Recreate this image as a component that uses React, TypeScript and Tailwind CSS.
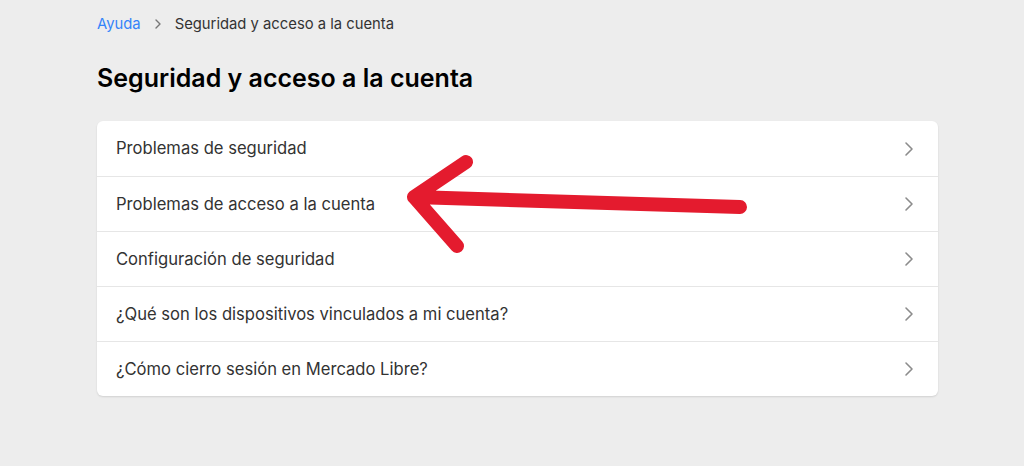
const items = [
  "Problemas de seguridad",
  "Problemas de acceso a la cuenta",
  "Configuración de seguridad",
  "¿Qué son los dispositivos vinculados a mi cuenta?",
  "¿Cómo cierro sesión en Mercado Libre?",
];

function Chevron() {
  return (
    <svg width="10" height="16" viewBox="0 0 10 16" fill="none" className="shrink-0">
      <path d="M2 2l6 6-6 6" stroke="#8c8c8c" strokeWidth="1.6" strokeLinecap="round" strokeLinejoin="round" />
    </svg>
  );
}

export default function App() {
  return (
    <main
      className="relative min-h-[466px] bg-[#ededed] text-[#333]"
      style={{ fontFamily: "Inter, 'Noto Sans', sans-serif" }}
    >
      <div className="ml-[97px] w-[841px] pt-[14px]">
        {/* breadcrumb */}
        <nav className="flex items-center text-[14.8px] leading-5">
          <a className="text-[#3483fa]">Ayuda</a>
          <span className="mx-[13px] text-[#666]">
            <svg width="8" height="12" viewBox="0 0 8 12" fill="none">
              <path d="M2 2l4 4-4 4" stroke="#777" strokeWidth="1.4" strokeLinecap="round" strokeLinejoin="round" />
            </svg>
          </span>
          <span className="text-[#333]">Seguridad y acceso a la cuenta</span>
        </nav>

        <h1 className="mt-[27px] text-[25px] font-semibold leading-[34px] text-black">
          Seguridad y acceso a la cuenta
        </h1>

        {/* CARD */}
        <div className="mt-[26px] overflow-hidden rounded-md bg-white shadow-[0_1px_2px_rgba(0,0,0,0.12)]">
          {items.map((t, i) => (
            <div
              key={t}
              className={
                "flex h-[55px] items-center justify-between pl-[19px] pr-[24px] text-[16.6px] text-[#333] " +
                (i > 0 ? "border-t border-[#e6e6e6]" : "")
              }
            >
              <span>{t}</span>
              <Chevron />
            </div>
          ))}
        </div>
      </div>

      {/* red annotation arrow */}
      <svg
        className="pointer-events-none absolute left-0 top-0"
        width="1024"
        height="466"
        viewBox="0 0 1024 466"
        fill="none"
      >
        <path
          d="M740 207 L414 197 M414 197 L466 162 M414 197 L457 246"
          stroke="#e41b2e"
          strokeWidth="14"
          strokeLinecap="round"
          strokeLinejoin="round"
        />
      </svg>
    </main>
  );
}
